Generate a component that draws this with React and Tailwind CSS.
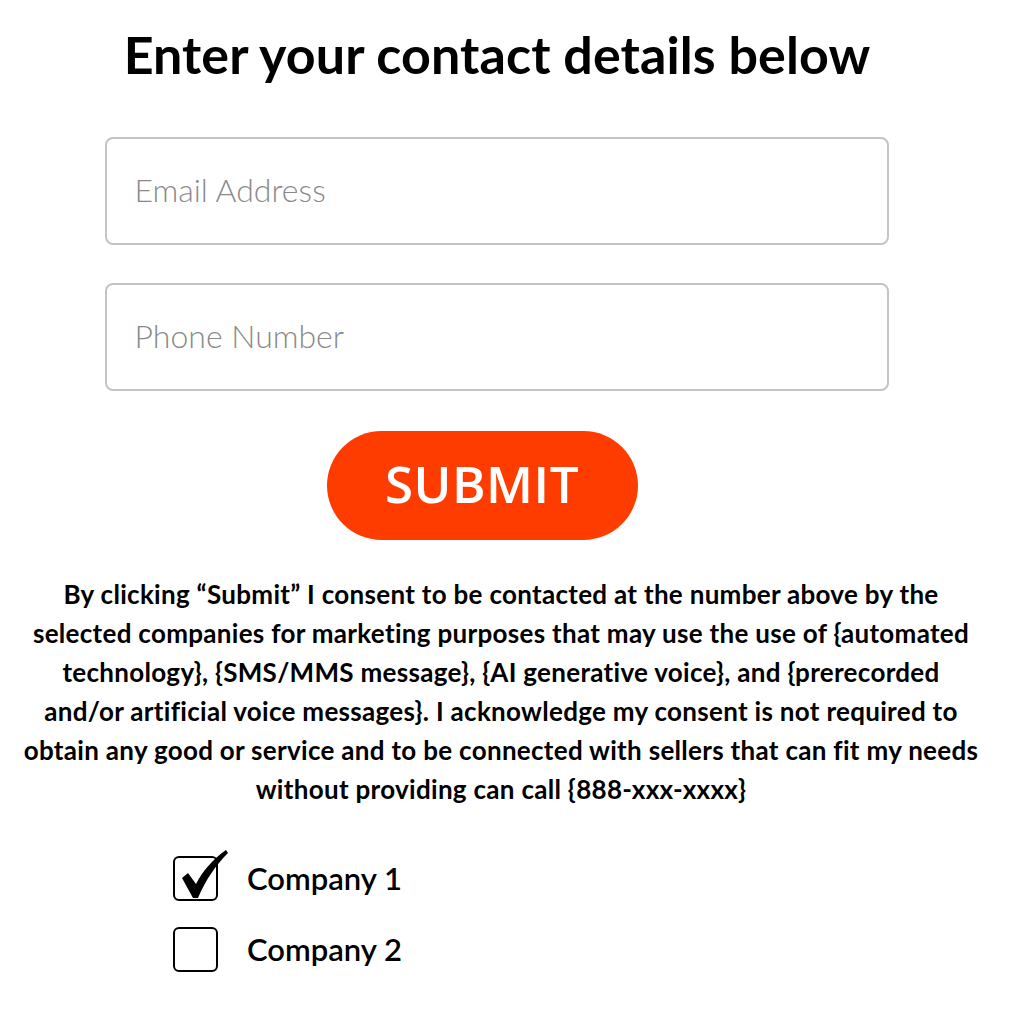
import React from "react";

export default function App() {
  const [checked, setChecked] = React.useState({ c1: true, c2: false });

  function toggle(key) {
    setChecked((prev) => ({ ...prev, [key]: !prev[key] }));
  }

  return (
    <div className="w-[1024px] h-[1024px] bg-white flex flex-col items-center font-['Lato',sans-serif] text-black">
      <h1 className="mt-[24px] ml-[-30px] text-[52px] leading-[60px] font-bold tracking-[0.1px]">
        Enter your contact details below
      </h1>

      <form className="flex flex-col items-center w-full" onSubmit={(e) => e.preventDefault()}>
        <input
          type="email"
          placeholder="Email Address"
          className="mt-[53px] ml-[-31px] w-[784px] h-[108px] rounded-[8px] border-2 border-[#c4c4c4] px-[28px] pb-[4px] text-[32px] font-light text-[#808080] placeholder-[#8a8a8a] outline-none"
        />
        <input
          type="tel"
          placeholder="Phone Number"
          className="mt-[38px] ml-[-31px] w-[784px] h-[108px] rounded-[8px] border-2 border-[#c4c4c4] px-[28px] pb-[4px] text-[32px] font-light text-[#808080] placeholder-[#8a8a8a] outline-none"
        />
        <button
          type="submit"
          className="mt-[40px] ml-[-60px] w-[311px] h-[109px] rounded-full bg-[#ff3c00] text-white text-[51px] font-semibold font-['Open_Sans',sans-serif] tracking-[0.5px] pb-[4px]"
        >
          SUBMIT
        </button>

        <p className="mt-[35px] ml-[-22px] w-[1010px] text-center text-[26px] leading-[39px] font-bold tracking-[0.3px]">
          By clicking “Submit” I consent to be contacted at the number above by the
          <br />
          selected companies for marketing purposes that may use the use of {"{automated"}
          <br />
          {"technology}, {SMS/MMS message}, {AI generative voice}, and {prerecorded"}
          <br />
          {"and/or artificial voice messages}. I acknowledge my consent is not required to"}
          <br />
          obtain any good or service and to be connected with sellers that can fit my needs
          <br />
          {"without providing can call {888-xxx-xxxx}"}
        </p>

        <div className="self-start ml-[173px] mt-[47px] flex flex-col gap-[26px]">
          {[
            { key: "c1", label: "Company 1" },
            { key: "c2", label: "Company 2" },
          ].map((item) => (
            <label key={item.key} className="flex items-center gap-[29px] cursor-pointer">
              <span
                onClick={() => toggle(item.key)}
                className="relative w-[45px] h-[45px] border-2 border-black rounded-[6px]"
              >
                {checked[item.key] && (
                  <svg
                    viewBox="0 0 50 56"
                    className="absolute left-[3px] top-[-10px] w-[50px] h-[56px]"
                  >
                    <path
                      d="M4 30 L10 25 L18 36 C24 24 34 12 48 2 L50 5 C38 17 28 31 20 50 L15 50 Z"
                      fill="black"
                    />
                  </svg>
                )}
              </span>
              <span className="text-[31px] font-semibold leading-[40px] pb-[2px]">{item.label}</span>
            </label>
          ))}
        </div>
      </form>
    </div>
  );
}
